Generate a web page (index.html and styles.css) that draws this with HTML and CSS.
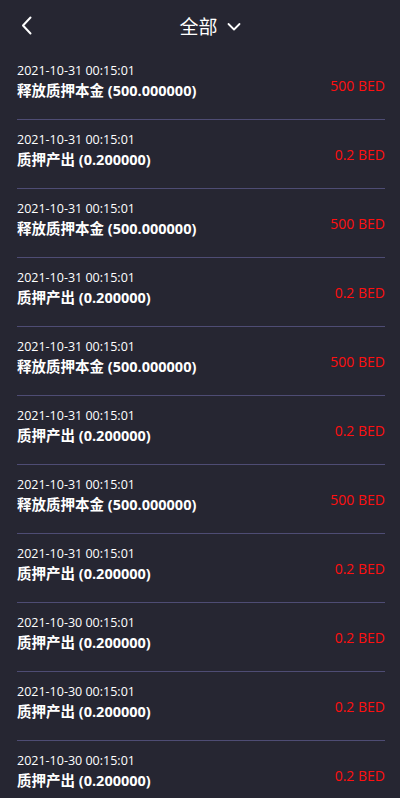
FILE: index.html
```html
<!DOCTYPE html>
<html lang="zh">
<head>
<meta charset="utf-8">
<title>全部</title>
<link rel="stylesheet" href="styles.css">
</head>
<body>
<div class="page">
  <header class="topbar">
    <span class="back">
      <svg width="11" height="19" viewBox="0 0 11 19"><path d="M9.5 1.5 L2 9.5 L9.5 17.5" fill="none" stroke="#fff" stroke-width="2" stroke-linecap="round" stroke-linejoin="round"/></svg>
    </span>
    <div class="title">全部
      <svg class="caret" width="14" height="10" viewBox="0 0 14 10"><path d="M1.5 2 L7 7.5 L12.5 2" fill="none" stroke="#fff" stroke-width="1.8" stroke-linecap="round" stroke-linejoin="round"/></svg>
    </div>
  </header>
  <ul class="list">
    <li class="row"><div class="info"><div class="date">2021-10-31 00:15:01</div><div class="name">释放质押本金 (500.000000)</div></div><div class="amt">500 BED</div></li>
    <li class="row"><div class="info"><div class="date">2021-10-31 00:15:01</div><div class="name">质押产出 (0.200000)</div></div><div class="amt">0.2 BED</div></li>
    <li class="row"><div class="info"><div class="date">2021-10-31 00:15:01</div><div class="name">释放质押本金 (500.000000)</div></div><div class="amt">500 BED</div></li>
    <li class="row"><div class="info"><div class="date">2021-10-31 00:15:01</div><div class="name">质押产出 (0.200000)</div></div><div class="amt">0.2 BED</div></li>
    <li class="row"><div class="info"><div class="date">2021-10-31 00:15:01</div><div class="name">释放质押本金 (500.000000)</div></div><div class="amt">500 BED</div></li>
    <li class="row"><div class="info"><div class="date">2021-10-31 00:15:01</div><div class="name">质押产出 (0.200000)</div></div><div class="amt">0.2 BED</div></li>
    <li class="row"><div class="info"><div class="date">2021-10-31 00:15:01</div><div class="name">释放质押本金 (500.000000)</div></div><div class="amt">500 BED</div></li>
    <li class="row"><div class="info"><div class="date">2021-10-31 00:15:01</div><div class="name">质押产出 (0.200000)</div></div><div class="amt">0.2 BED</div></li>
    <li class="row"><div class="info"><div class="date">2021-10-30 00:15:01</div><div class="name">质押产出 (0.200000)</div></div><div class="amt">0.2 BED</div></li>
    <li class="row"><div class="info"><div class="date">2021-10-30 00:15:01</div><div class="name">质押产出 (0.200000)</div></div><div class="amt">0.2 BED</div></li>
    <li class="row"><div class="info"><div class="date">2021-10-30 00:15:01</div><div class="name">质押产出 (0.200000)</div></div><div class="amt">0.2 BED</div></li>
  </ul>
</div>
</body>
</html>
```

FILE: styles.css
```css
html, body {
  margin: 0;
  padding: 0;
  background: #262632;
}
body {
  font-family: "Open Sans", "Noto Sans CJK SC", sans-serif;
  color: #fff;
  height: 798px;
  overflow: hidden;
}
.page {
  width: 400px;
}
.topbar {
  position: relative;
  height: 51px;
  display: flex;
  align-items: center;
  justify-content: center;
}
.back {
  position: absolute;
  left: 21px;
  top: 16px;
  display: flex;
}
.title {
  display: flex;
  align-items: center;
  gap: 9px;
  font-size: 19px;
  font-family: "Noto Sans CJK SC", sans-serif;
  margin-left: 20px;
  line-height: 1;
}
.caret {
  margin-top: 2px;
}
.list {
  list-style: none;
  margin: 0;
  padding: 0 15px 0 17px;
}
.row {
  height: 68px;
  display: flex;
  align-items: center;
  justify-content: space-between;
  border-bottom: 1px solid #4e4c74;
}
.info {
  display: flex;
  flex-direction: column;
  gap: 1px;
  margin-top: -8px;
}
.date {
  font-size: 12.5px;
  line-height: 18px;
  color: #fff;
}
.name {
  font-size: 14.5px;
  font-weight: bold;
  line-height: 19px;
  font-family: "Open Sans", "Noto Sans CJK SC", sans-serif;
}
.amt {
  color: #ff1010;
  font-size: 14px;
  margin-top: 1px;
}
```
